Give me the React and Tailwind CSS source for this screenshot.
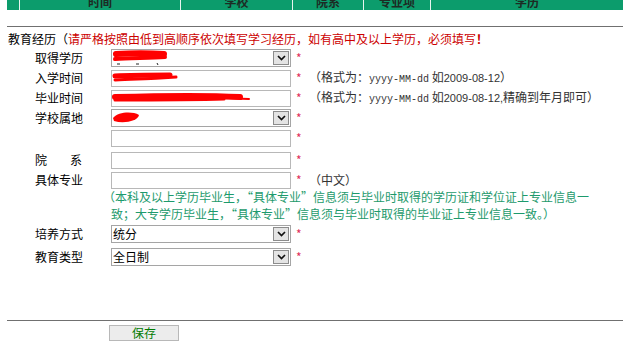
import React from 'react';

const cols = [
  { w: 'w-[12px]', text: '' },
  { w: 'w-[161px]', text: '时间' },
  { w: 'w-[112px]', text: '学校' },
  { w: 'w-[71px]', text: '院系' },
  { w: 'w-[67px]', text: '专业项' },
  { w: 'flex-1', text: '学历' },
];

function Star() {
  return <span className="w-[22px] pl-[5px] text-[12px] leading-[16px] text-[#e0305a]">*</span>;
}

function Scribble({ children }) {
  return (
    <svg className="absolute left-0 top-0 pointer-events-none" width="180" height="18" viewBox="0 0 180 18">
      {children}
    </svg>
  );
}

function SelectBox({ value, scribble }) {
  return (
    <div className="relative w-[180px] h-[18px] border border-[#a5a5a5] bg-white flex items-center">
      <span className="flex-1 pl-[1px] text-[12px] leading-[16px] text-black">{value}</span>
      <span className="mr-[1px] w-[16px] h-[14px] bg-[#e4e4e4] border border-[#8c8c8c] flex items-center justify-center">
        <svg width="9" height="6" viewBox="0 0 9 6">
          <path d="M1 1l3.5 3.5L8 1" stroke="#111" strokeWidth="1.7" fill="none" />
        </svg>
      </span>
      {scribble && <Scribble>{scribble}</Scribble>}
    </div>
  );
}

function TextBox({ scribble }) {
  return (
    <div className="relative w-[180px] h-[17px] border border-[#b8b8b8] bg-white">
      {scribble && <Scribble>{scribble}</Scribble>}
    </div>
  );
}

function Row({ label, children, note, className = 'h-[20px]' }) {
  return (
    <div className={`flex items-center ${className}`}>
      <div className="w-[104px] pl-[28px] text-[12px] leading-[16px] text-black">{label}</div>
      {children}
      <Star />
      {note && <span className="-ml-[4px] text-[12px] leading-[16px] text-[#333]">{note}</span>}
    </div>
  );
}

function DateNote({ extra }) {
  return (
    <>
      （格式为：<span className="font-['Liberation_Mono'] text-[10px]">yyyy-MM-dd</span>
      {' '}如<span className="font-['Liberation_Sans'] text-[11px]">2009-08-12</span>
      {extra && <span className="font-['Liberation_Sans'] text-[11px]">,</span>}
      {extra}）
    </>
  );
}

export default function App() {
  return (
    <div className="w-[623px] h-[344px] overflow-hidden bg-white pl-[7px] font-['Noto_Sans_CJK_SC',sans-serif]">
      {/* table header, scrolled so only the lower half shows */}
      <div className="h-[10px] overflow-hidden bg-[#0c9c6c]">
        <div className="flex h-[20px] -mt-[8px]">
          {cols.map((c, i) => (
            <div
              key={i}
              className={`${c.w} flex items-center justify-center text-[12px] font-bold leading-[20px] text-[#1d2b24] ${i > 0 ? 'border-l border-[#e8f5ef]' : ''}`}
            >
              {c.text}
            </div>
          ))}
        </div>
      </div>

      <div className="mt-[16px] border-t border-[#707070]" />

      <div className="h-[21px] pt-[4px] pl-[1px] text-[12px] leading-[16px] text-black">
        教育经历（<span className="text-[#cc0000]">请严格按照由低到高顺序依次填写学习经历，如有高中及以上学历，必须填写<b>！</b></span>
      </div>

      <Row label="取得学历">
        <SelectBox
          scribble={
            <>
              <path d="M4 4 C20 3, 38 3, 52 4" stroke="#ff0000" strokeWidth="6" strokeLinecap="round" fill="none" />
              <path d="M3 9 C18 8, 36 8, 53 7" stroke="#ff0000" strokeWidth="4" strokeLinecap="round" fill="none" />
              <path d="M5 14 L8 14 M24 14 L27 14 M45 13 L46 15" stroke="#222" strokeWidth="1" fill="none" />
            </>
          }
        />
      </Row>
      <Row label="入学时间" note={<DateNote />}>
        <TextBox
          scribble={
            <>
              <path d="M3 5 C20 4, 40 4, 58 4" stroke="#ff0000" strokeWidth="5" strokeLinecap="round" fill="none" />
              <path d="M3 9 C20 8, 35 8, 48 7 L64 6" stroke="#ff0000" strokeWidth="3" strokeLinecap="round" fill="none" />
            </>
          }
        />
      </Row>
      <Row label="毕业时间" note={<DateNote extra="精确到年月即可" />}>
        <TextBox
          scribble={
            <>
              <path d="M3 6 C40 5, 90 4, 128 6" stroke="#ff0000" strokeWidth="6" strokeLinecap="round" fill="none" />
              <path d="M3 9 C40 9, 80 9, 112 8" stroke="#ff0000" strokeWidth="3" strokeLinecap="round" fill="none" />
              <path d="M110 7 L137 8" stroke="#ff0000" strokeWidth="2" strokeLinecap="round" fill="none" />
            </>
          }
        />
      </Row>
      <Row label="学校属地">
        <SelectBox
          scribble={
            <path d="M1 8 C6 2, 20 1, 27 5 C26 11, 12 14, 2 11 Z" fill="#ff0000" />
          }
        />
      </Row>
      <Row label="">
        <TextBox />
      </Row>
      <Row
        className="h-[20px] mt-[2px]"
        label={
          <span className="flex w-[47px] justify-between">
            <span>院</span>
            <span>系</span>
          </span>
        }
      >
        <TextBox />
      </Row>
      <Row label="具体专业" note="（中文）">
        <TextBox />
      </Row>

      <div className="-mt-[2px] pl-[104px] -indent-2 text-[12px] leading-[17px] text-[#1d9a6c]">
        （本科及以上学历毕业生，“具体专业”信息须与毕业时取得的学历证和学位证上专业信息一
        <br />
        致；大专学历毕业生，“具体专业”信息须与毕业时取得的毕业证上专业信息一致。）
      </div>

      <Row label="培养方式" className="h-[23px]">
        <SelectBox value="统分" />
      </Row>
      <Row label="教育类型" className="h-[23px]">
        <SelectBox value="全日制" />
      </Row>

      <div className="mt-[52px] border-t border-[#707070]" />

      <div className="flex mt-[4px] ml-[102px]">
        <button className="w-[70px] h-[16px] bg-[#ececec] border border-[#b8b8b8] text-[12px] leading-[14px] text-[#007a00]">
          保存
        </button>
      </div>
    </div>
  );
}
